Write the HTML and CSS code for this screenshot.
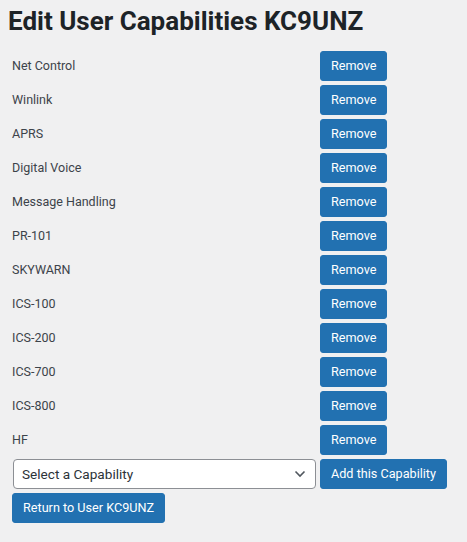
FILE: index.html
```html
<!DOCTYPE html>
<html>
<head>
<meta charset="utf-8">
<link rel="stylesheet" href="styles.css">
</head>
<body>
<h1 class="title">Edit User Capabilities KC9UNZ</h1>
<div class="caps">
  <div class="label">Net Control</div><button class="btn">Remove</button>
  <div class="label">Winlink</div><button class="btn">Remove</button>
  <div class="label">APRS</div><button class="btn">Remove</button>
  <div class="label">Digital Voice</div><button class="btn">Remove</button>
  <div class="label">Message Handling</div><button class="btn">Remove</button>
  <div class="label">PR-101</div><button class="btn">Remove</button>
  <div class="label">SKYWARN</div><button class="btn">Remove</button>
  <div class="label">ICS-100</div><button class="btn">Remove</button>
  <div class="label">ICS-200</div><button class="btn">Remove</button>
  <div class="label">ICS-700</div><button class="btn">Remove</button>
  <div class="label">ICS-800</div><button class="btn">Remove</button>
  <div class="label">HF</div><button class="btn">Remove</button>
  <div class="select">
    <span class="select-text">Select a Capability</span>
    <svg class="chev" width="12" height="8" viewBox="0 0 12 8"><path d="M1.5 1.5 L6 6 L10.5 1.5" fill="none" stroke="#50575e" stroke-width="1.6"/></svg>
  </div>
  <button class="btn">Add this Capability</button>
</div>
<div class="footer">
  <button class="btn">Return to User KC9UNZ</button>
</div>
</body>
</html>
```

FILE: styles.css
```css
html, body {
  margin: 0;
  padding: 0;
  background: #f0f0f1;
}
body {
  padding: 0 8px;
  font-family: Roboto, "Liberation Sans", sans-serif;
  font-size: 12.5px;
  color: #3c434a;
}
.title {
  margin: 0;
  padding-top: 6px;
  font-size: 26px;
  line-height: 31px;
  font-weight: 700;
  color: #1d2327;
}
.caps {
  margin-top: 14px;
  padding-left: 4px;
  display: grid;
  grid-template-columns: 308px auto;
  row-gap: 4px;
  justify-items: start;
  align-items: center;
}
.label {
  line-height: 30px;
}
.btn {
  display: inline-block;
  height: 30px;
  padding: 0 10px;
  margin: 0;
  border: 1px solid #2271b1;
  border-radius: 3px;
  background: #2271b1;
  color: #fff;
  font-family: Roboto, "Liberation Sans", sans-serif;
  font-size: 12.65px;
  line-height: 28px;
  cursor: pointer;
}
.select {
  box-sizing: border-box;
  margin-left: 1px;
  width: 303px;
  height: 30px;
  background: #fff;
  border: 1px solid #8c8f94;
  border-radius: 4px;
  display: flex;
  align-items: center;
  justify-content: space-between;
  padding: 0 9px 0 8px;
  font-size: 13.6px;
  color: #2c3338;
}
.chev {
  display: block;
}
.footer {
  margin-top: 4px;
  padding-left: 4px;
}
```
